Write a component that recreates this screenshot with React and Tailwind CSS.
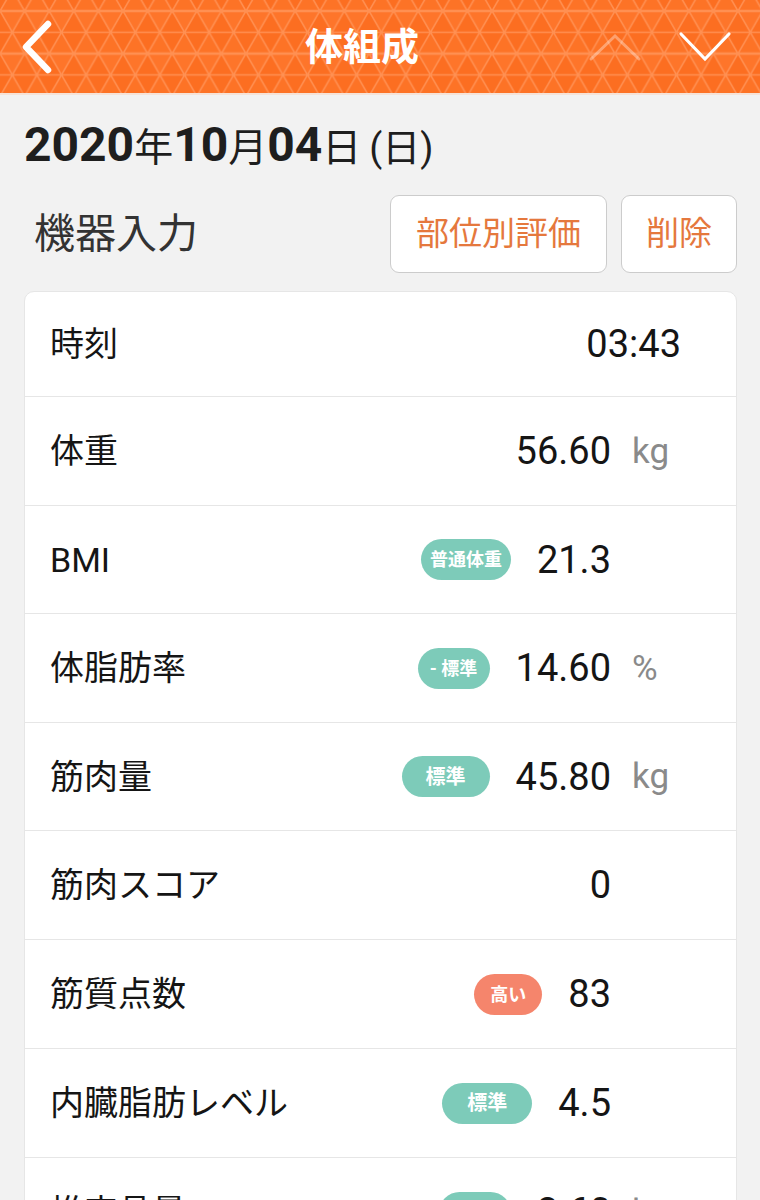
import React from "react";

const FONT = { fontFamily: "Roboto, 'Noto Sans CJK JP', sans-serif" };

function HeaderPattern() {
  return (
    <svg className="absolute inset-0 h-full w-full" xmlns="http://www.w3.org/2000/svg">
      <defs>
        <pattern id="tri" x="0" y="11" width="24.6" height="42.6" patternUnits="userSpaceOnUse">
          <polygon points="0,0 24.6,0 12.3,21.3" fill="#ff7a30" opacity="0.6" />
          <polygon points="12.3,21.3 24.6,42.6 0,42.6" fill="#ff7a30" opacity="0.35" />
          <path d="M0 0 L24.6 42.6 M24.6 0 L0 42.6 M0 0.5 H24.6 M0 21.3 H24.6 M0 42.1 H24.6" stroke="#ff9052" strokeWidth="1.6" fill="none" />
        </pattern>
      </defs>
      <rect width="100%" height="100%" fill="url(#tri)" />
    </svg>
  );
}

function Badge({ text, w, color = "teal", size = "sm" }) {
  return (
    <span
      className={`flex h-[41px] items-center justify-center rounded-full font-bold text-white ${
        color === "teal" ? "bg-[#7dcbb9]" : "bg-[#f5856c]"
      } ${size === "lg" ? "text-[20px]" : "text-[18px]"}`}
      style={{ width: w }}
    >
      {text}
    </span>
  );
}

function Row({ label, badge, value, unit, h, first, time }) {
  return (
    <div className={`flex items-center border-[#e6e6e6] pl-[25px] ${first ? "" : "border-t"} ${h}`}>
      <span className="text-[34px] leading-none text-[#151515]">{label}</span>
      <div className="ml-auto flex items-center">
        {badge && <span className="mr-[26px]">{badge}</span>}
        <span className="text-[38px] leading-none text-[#151515]">{value}</span>
        {time ? (
          <span className="w-[55px]" />
        ) : (
          <span className="w-[125px] pl-[21px] text-[35px] leading-none text-[#8a8a8a]">{unit}</span>
        )}
      </div>
    </div>
  );
}

export default function App() {
  return (
    <div className="h-[1200px] w-[760px] overflow-hidden bg-[#f2f2f2]" style={FONT}>
      <div className="relative flex h-[93px] items-center bg-[#fc6e21]">
        <HeaderPattern />
        <svg className="relative ml-[18px] h-[54px] w-[36px]" viewBox="0 0 36 54">
          <path d="M30 4 L8 27 L30 50" stroke="#fff" strokeWidth="6.5" fill="none" strokeLinecap="round" strokeLinejoin="round" />
        </svg>
        <span className="relative ml-[251px] text-[38px] font-bold leading-none text-white">体組成</span>
        <svg className="relative ml-auto h-[30px] w-[54px]" viewBox="0 0 54 30">
          <path d="M3 27 L27 4 L51 27" stroke="#fff" strokeOpacity="0.35" strokeWidth="3" fill="none" strokeLinecap="round" />
        </svg>
        <svg className="relative ml-[36px] mr-[28px] h-[32px] w-[54px]" viewBox="0 0 54 32">
          <path d="M3 3 L27 28 L51 3" stroke="#fff" strokeWidth="3.2" fill="none" strokeLinecap="round" />
        </svg>
      </div>
      <div className="h-[2px] bg-[#f6e3d8]" />

      <div className="mt-[26px] flex h-[46px] items-baseline pl-[24px] leading-none text-[#1e1e1e]">
        <span className="text-[48px] font-bold">2020</span>
        <span className="text-[39px]">年</span>
        <span className="text-[48px] font-bold">10</span>
        <span className="text-[39px]">月</span>
        <span className="text-[48px] font-bold">04</span>
        <span className="text-[39px]">日</span>
        <span className="ml-[8px] text-[38px]">(日)</span>
      </div>

      <div className="mt-[28px] flex items-center pl-[34px] pr-[23px]">
        <span className="text-[41px] leading-none text-[#333]">機器入力</span>
        <button className="ml-auto flex h-[78px] w-[217px] items-center justify-center rounded-[9px] border border-[#cccccc] bg-white text-[33px] text-[#e5783d]">
          部位別評価
        </button>
        <button className="ml-[14px] flex h-[78px] w-[116px] items-center justify-center rounded-[9px] border border-[#cccccc] bg-white text-[33px] text-[#e5783d]">
          削除
        </button>
      </div>

      <div className="ml-[24px] mr-[23px] mt-[18px] rounded-[10px] border border-[#e6e6e6] bg-white">
        <Row first h="h-[104px]" label="時刻" value="03:43" time />
        <Row h="h-[109px]" label="体重" value="56.60" unit="kg" />
        <Row h="h-[108px]" label="BMI" badge={<Badge text="普通体重" w={90} />} value="21.3" />
        <Row h="h-[109px]" label="体脂肪率" badge={<Badge text="- 標準" w={72} />} value="14.60" unit="%" />
        <Row h="h-[108px]" label="筋肉量" badge={<Badge text="標準" w={88} size="lg" />} value="45.80" unit="kg" />
        <Row h="h-[109px]" label="筋肉スコア" value="0" />
        <Row h="h-[109px]" label="筋質点数" badge={<Badge text="高い" w={68} color="salmon" />} value="83" />
        <Row h="h-[109px]" label="内臓脂肪レベル" badge={<Badge text="標準" w={90} size="lg" />} value="4.5" />
        <Row h="h-[109px]" label="推定骨量" badge={<Badge text="標準" w={72} size="lg" />} value="2.60" unit="kg" />
      </div>
    </div>
  );
}
